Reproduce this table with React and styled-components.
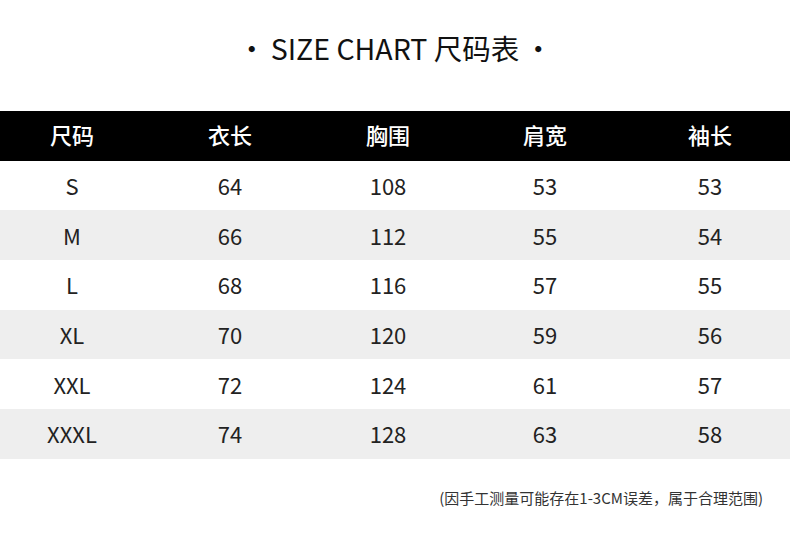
import React from 'react';
import styled, { createGlobalStyle } from 'styled-components';

const GlobalStyle = createGlobalStyle`
  html, body {
    margin: 0;
    padding: 0;
    background: #ffffff;
  }
  body {
    font-family: "Noto Sans CJK SC", "Noto Sans", sans-serif;
    color: #222;
  }
`;

const Page = styled.div`
  width: 790px;
  height: 534px;
  display: flex;
  flex-direction: column;
  background: #fff;
  overflow: hidden;
`;

const Title = styled.h1`
  margin: 0;
  height: 111px;
  display: flex;
  align-items: center;
  justify-content: center;
  padding-bottom: 17px;
  box-sizing: border-box;
  font-size: 28.5px;
  font-weight: 400;
  color: #111;
`;

const Dot = styled.span`
  margin: 0 7px;
  font-weight: 700;
  font-size: 24px;
`;

const Table = styled.div`
  display: flex;
  flex-direction: column;
`;

const Row = styled.div`
  display: grid;
  grid-template-columns: 144px 172px 144px 170px 1fr;
  height: 49.7px;
  align-items: center;
  padding-bottom: ${(p) => (p.$head ? '3px' : '1px')};
  box-sizing: border-box;
  background: ${(p) => (p.$head ? '#000' : p.$shaded ? '#eeeeee' : '#fff')};
  color: ${(p) => (p.$head ? '#fff' : '#222')};
  font-weight: ${(p) => (p.$head ? 500 : 400)};
  font-size: 22px;
`;

const Cell = styled.div`
  text-align: center;
  line-height: 1;
`;

const Note = styled.div`
  display: flex;
  justify-content: flex-end;
  padding: 28px 27px 0 0;
  font-size: 15px;
  color: #333;
`;

const head = ['尺码', '衣长', '胸围', '肩宽', '袖长'];
const rows = [
  ['S', 64, 108, 53, 53],
  ['M', 66, 112, 55, 54],
  ['L', 68, 116, 57, 55],
  ['XL', 70, 120, 59, 56],
  ['XXL', 72, 124, 61, 57],
  ['XXXL', 74, 128, 63, 58],
];

export default function App() {
  return (
    <Page>
      <GlobalStyle />
      <Title>
        <Dot>·</Dot>SIZE CHART 尺码表<Dot>·</Dot>
      </Title>
      <Table>
        <Row $head>
          {head.map((h) => (
            <Cell key={h}>{h}</Cell>
          ))}
        </Row>
        {rows.map((r, i) => (
          <Row key={r[0]} $shaded={i % 2 === 1}>
            {r.map((v, j) => (
              <Cell key={j}>{v}</Cell>
            ))}
          </Row>
        ))}
      </Table>
      <Note>(因手工测量可能存在1-3CM误差，属于合理范围)</Note>
    </Page>
  );
}
